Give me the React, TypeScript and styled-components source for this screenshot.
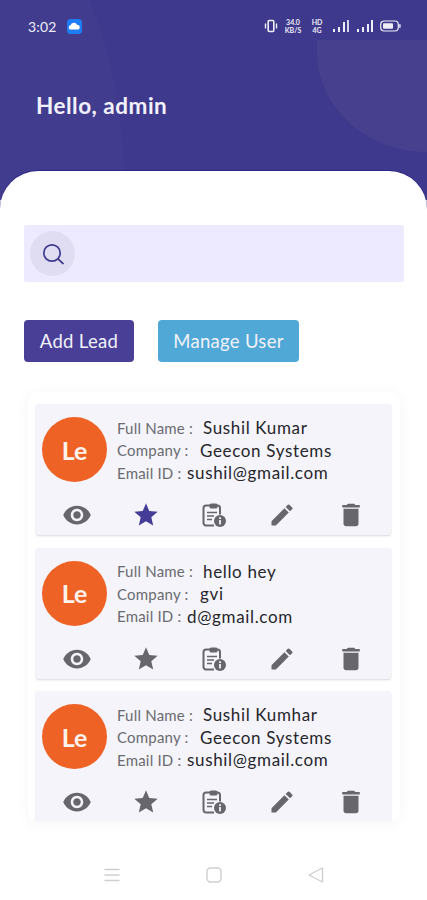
import React, { FC } from 'react';
import styled, { createGlobalStyle } from 'styled-components';
import { MdVisibility, MdStar, MdEdit, MdDelete } from 'react-icons/md';

const leads = [
    { name: 'Sushil Kumar', company: 'Geecon Systems', email: 'sushil@gmail.com', starred: true },
    { name: 'hello hey', company: 'gvi', email: 'd@gmail.com', starred: false },
    { name: 'Sushil Kumhar', company: 'Geecon Systems', email: 'sushil@gmail.com', starred: false },
];

const GlobalStyle = createGlobalStyle`
  html, body {
    margin: 0;
    padding: 0;
    background: #fff;
    font-family: "Lato", "Noto Sans", sans-serif;
  }
  * { box-sizing: border-box; }
`;

const Page = styled.div`
  position: relative;
  width: 427px;
  height: 900px;
  overflow: hidden;
  background: #fff;
  display: flex;
  flex-direction: column;
`;

const Header = styled.header`
  position: relative;
  height: 200px;
  flex: none;
  background: #3e398c;
  overflow: hidden;
`;

const BlobLeft = styled.div`
  position: absolute;
  left: -160px;
  top: -60px;
  width: 285px;
  height: 300px;
  border-top-right-radius: 100px 260px;
  background: #413c8e;
`;

const BlobRight = styled.div`
  position: absolute;
  left: 317px;
  top: 40px;
  width: 120px;
  height: 112px;
  border-bottom-left-radius: 110px 100px;
  background: #46408f;
`;

const StatusBar = styled.div`
  position: relative;
  height: 54px;
  padding: 15px 26px 0 28px;
  display: flex;
  align-items: flex-start;
  justify-content: space-between;
  color: #eeeef8;
`;

const StatusLeft = styled.div`
  display: flex;
  align-items: center;
  gap: 10px;
  height: 22px;
`;

const Clock = styled.span`
  font-size: 14px;
  letter-spacing: 0.2px;
`;

const StatusRight = styled.div`
  display: flex;
  align-items: center;
  gap: 6px;
  height: 22px;
`;

const TinyText = styled.span`
  width: 18px;
  font-size: 7px;
  font-weight: 700;
  line-height: 8px;
  text-align: center;
  color: #eeeef8;
`;

const Greeting = styled.h1`
  position: relative;
  margin: 0;
  padding: 39px 0 0 36px;
  font-size: 22.5px;
  line-height: 26px;
  font-weight: 700;
  color: #f2f1fb;
  letter-spacing: 0.5px;
`;

const Sheet = styled.main`
  position: relative;
  margin-top: -29px;
  flex: 1;
  min-height: 0;
  background: #fff;
  border-radius: 38px 38px 0 0;
  box-shadow: 0 -1px 0 #2c2488;
  padding: 54px 23px 0 24px;
  display: flex;
  flex-direction: column;
`;

const SearchBar = styled.div`
  height: 57px;
  background: #edeaff;
  border-radius: 2px;
  padding: 6px;
  display: flex;
  align-items: center;
`;

const SearchIcon = styled.div`
  width: 45px;
  height: 45px;
  border-radius: 50%;
  background: #e0ddf2;
  display: flex;
  align-items: center;
  justify-content: center;
`;

const Actions = styled.div`
  margin-top: 38px;
  display: flex;
  gap: 24px;
`;

const ActionButton = styled.button<{ $bg: string; $width: number }>`
  width: ${({ $width }) => $width}px;
  height: 42px;
  padding: 0;
  border: none;
  border-radius: 4px;
  background: ${({ $bg }) => $bg};
  color: #f1f1fa;
  font-family: inherit;
  font-size: 18.5px;
  font-weight: 400;
  letter-spacing: 0.3px;
`;

const ListPanel = styled.section`
  margin: 30px 4px 0 4px;
  padding: 12px 9px 0 8px;
  height: 429px;
  flex: none;
  background: #fff;
  border-radius: 10px;
  box-shadow: 0 2px 14px rgba(60, 60, 110, 0.05);
  overflow: hidden;
  display: flex;
  flex-direction: column;
  gap: 12.5px;
`;

const Card = styled.article`
  flex: none;
  height: 131px;
  background: #f4f4fa;
  border-radius: 3px;
  box-shadow: 0 1px 2px rgba(40, 40, 60, 0.18);
  padding: 13px 6px 0;
`;

const CardTop = styled.div`
  display: flex;
  align-items: flex-start;
  gap: 10px;
`;

const Avatar = styled.div`
  width: 65px;
  height: 65px;
  flex: none;
  border-radius: 50%;
  background: #ee6226;
  color: #fdf3ec;
  display: flex;
  align-items: center;
  justify-content: center;
  font-size: 25px;
  font-weight: 700;
`;

const Details = styled.div`
  margin-top: -0.5px;
  display: flex;
  flex-direction: column;
`;

const DetailRow = styled.div`
  height: 22.5px;
  display: flex;
  align-items: center;
  white-space: nowrap;
`;

const Label = styled.span<{ $width: number }>`
  width: ${({ $width }) => $width}px;
  flex: none;
  font-size: 15px;
  letter-spacing: 0.2px;
  color: #6b6b70;
`;

const Value = styled.span`
  font-size: 17px;
  color: #26262b;
  letter-spacing: 0.65px;
`;

const IconRow = styled.div`
  margin-top: 17px;
  display: grid;
  grid-template-columns: repeat(5, 1fr);
  padding: 0 0 0 1px;
`;

const IconCell = styled.div<{ $active?: boolean }>`
  height: 28px;
  display: flex;
  align-items: center;
  justify-content: center;
  color: ${({ $active }) => ($active ? '#443c96' : '#66666c')};
`;

const BottomNav = styled.nav`
  position: absolute;
  left: 0;
  right: 0;
  bottom: 17px;
  display: flex;
  justify-content: center;
  gap: 86px;
`;

const CloudBadge: FC = () => (
    <svg width="15" height="15" viewBox="0 0 15 15">
        <rect width="15" height="15" rx="3.5" fill="#1e7cf5" />
        <path d="M3 10.5 a2.2 2.2 0 0 1 .6-4.2 a3.4 3.4 0 0 1 6.5 -.4 a2.4 2.4 0 0 1 1.2 4.6z" fill="#fff" />
    </svg>
);

const VibrateIcon: FC = () => (
    <svg width="14" height="14" viewBox="0 0 14 14" fill="none" stroke="#eeeef8">
        <rect x="4.2" y="1.5" width="5.6" height="11" rx="1" strokeWidth="1.6" />
        <path d="M1.5 4.5v5M12.5 4.5v5" strokeWidth="1.4" />
    </svg>
);

const SignalIcon: FC<{ small?: boolean }> = ({ small }) => (
    <svg width="18" height="14" viewBox="0 0 18 14" fill="#eeeef8">
        <rect x="1" y="10" width="2" height="3" />
        <rect x="6" y="8" width="2" height="5" />
        <rect x="11" y={small ? 5 : 3} width="2" height={small ? 8 : 10} />
        <rect x="15" y="1" width="2" height="12" opacity={small ? 1 : 0.85} />
    </svg>
);

const BatteryIcon: FC = () => (
    <svg width="21" height="12" viewBox="0 0 21 12" fill="none">
        <rect x="0.7" y="1" width="17.6" height="10" rx="3.5" stroke="#eeeef8" strokeWidth="1.2" />
        <rect x="3" y="3.2" width="10" height="5.6" rx="1" fill="#eeeef8" />
        <rect x="19.2" y="4" width="1.4" height="4" rx="0.7" fill="#eeeef8" />
    </svg>
);

const MagnifierIcon: FC = () => (
    <svg width="24" height="24" viewBox="0 0 24 24" fill="none" stroke="#3f3a8e" strokeWidth="1.7" strokeLinecap="round">
        <circle cx="11" cy="11" r="8.2" />
        <path d="M17.2 17.2 L22 21.5" />
    </svg>
);

// document with a clip on top and an info badge, not in the icon packs
const LeadInfoIcon: FC = () => (
    <svg width="26" height="26" viewBox="0 0 26 26" fill="none">
        <path
            d="M10.5 3.5H5a2.5 2.5 0 0 0-2.5 2.5v15A2.5 2.5 0 0 0 5 23.5h8M19 12.5V6a2.5 2.5 0 0 0-2.5-2.5H15"
            stroke="currentColor"
            strokeWidth="2"
        />
        <rect x="8.5" y="1.5" width="8" height="5" rx="1.5" fill="currentColor" />
        <path d="M6 10.5h10M6 14h7M6 17.5h5" stroke="currentColor" strokeWidth="1.6" />
        <circle cx="19" cy="19" r="6" fill="currentColor" />
        <rect x="18.1" y="18" width="1.8" height="4.4" fill="#f4f4fa" />
        <rect x="18.1" y="15.2" width="1.8" height="1.8" fill="#f4f4fa" />
    </svg>
);

const MenuNavIcon: FC = () => (
    <svg width="16" height="16" viewBox="0 0 16 16" stroke="#cfcfd2" strokeWidth="1.3" fill="none">
        <path d="M0.5 2.5h15M0.5 8h15M0.5 13.5h15" />
    </svg>
);

const HomeNavIcon: FC = () => (
    <svg width="16" height="16" viewBox="0 0 16 16" stroke="#cfcfd2" strokeWidth="1.4" fill="none">
        <rect x="1" y="1" width="14" height="14" rx="3.5" />
    </svg>
);

const BackNavIcon: FC = () => (
    <svg width="16" height="16" viewBox="0 0 16 16" stroke="#cfcfd2" strokeWidth="1.4" fill="none" strokeLinejoin="round">
        <path d="M14.5 1 L1 8 L14.5 15z" />
    </svg>
);

export default function App() {
    return (
        <Page>
            <GlobalStyle />
            <Header>
                <BlobLeft />
                <BlobRight />
                <StatusBar>
                    <StatusLeft>
                        <Clock>3:02</Clock>
                        <CloudBadge />
                    </StatusLeft>
                    <StatusRight>
                        <VibrateIcon />
                        <TinyText>34.0<br />KB/S</TinyText>
                        <TinyText>HD<br />4G</TinyText>
                        <SignalIcon />
                        <SignalIcon small />
                        <BatteryIcon />
                    </StatusRight>
                </StatusBar>
                <Greeting>Hello, admin</Greeting>
            </Header>
            <Sheet>
                <SearchBar>
                    <SearchIcon><MagnifierIcon /></SearchIcon>
                </SearchBar>
                <Actions>
                    <ActionButton $bg="#4a3f97" $width={110}>Add Lead</ActionButton>
                    <ActionButton $bg="#4fa8d5" $width={141}>Manage User</ActionButton>
                </Actions>
                <ListPanel>
                    {leads.map((lead) => (
                        <Card key={lead.name}>
                            <CardTop>
                                <Avatar>Le</Avatar>
                                <Details>
                                    <DetailRow><Label $width={86}>Full Name :</Label><Value>{lead.name}</Value></DetailRow>
                                    <DetailRow><Label $width={83}>Company :</Label><Value>{lead.company}</Value></DetailRow>
                                    <DetailRow><Label $width={70}>Email ID :</Label><Value>{lead.email}</Value></DetailRow>
                                </Details>
                            </CardTop>
                            <IconRow>
                                <IconCell><MdVisibility size={30} /></IconCell>
                                <IconCell $active={lead.starred}><MdStar size={28} /></IconCell>
                                <IconCell><LeadInfoIcon /></IconCell>
                                <IconCell><MdEdit size={28} /></IconCell>
                                <IconCell><MdDelete size={30} /></IconCell>
                            </IconRow>
                        </Card>
                    ))}
                </ListPanel>
            </Sheet>
            <BottomNav>
                <MenuNavIcon />
                <HomeNavIcon />
                <BackNavIcon />
            </BottomNav>
        </Page>
    );
}
